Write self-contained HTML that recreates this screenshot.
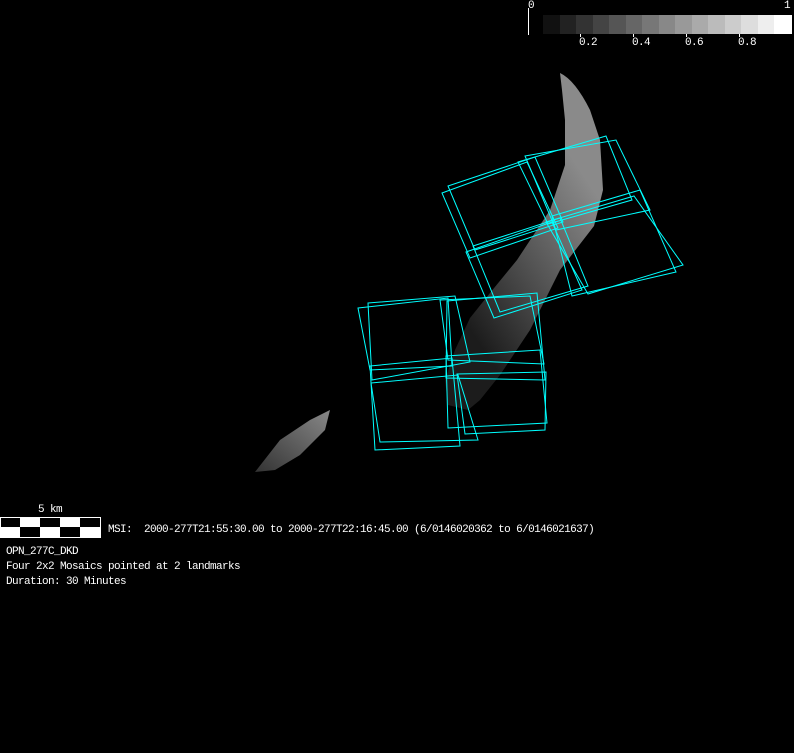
<!DOCTYPE html>
<html><head><meta charset="utf-8"><style>
html,body{margin:0;padding:0;background:#000;width:794px;height:753px;overflow:hidden;position:relative}
.t{position:absolute;color:#fff;font:11px "Liberation Mono",monospace;white-space:pre;line-height:12px;letter-spacing:-0.6px}
</style></head><body>
<svg width="794" height="753" style="position:absolute;left:0;top:0">
<defs>
<linearGradient id="g" gradientUnits="userSpaceOnUse" x1="450" y1="300" x2="600" y2="200">
<stop offset="0" stop-color="#1c1c1c"/><stop offset="0.5" stop-color="#555"/><stop offset="1" stop-color="#8a8a8a"/>
</linearGradient>
<linearGradient id="g2" x1="0" y1="1" x2="1" y2="0">
<stop offset="0" stop-color="#333"/><stop offset="1" stop-color="#888"/>
</linearGradient>
</defs>
<path d="M560,73 Q575,80 590,110 L600,140 L603,190 L594,226 L560,270 L530,330 L500,375 L480,400 L468,410 L448,405 L445,380 L455,350 L470,318 L490,293 L517,260 L550,210 L565,165 L565,120 L562,90 Z" fill="url(#g)"/>
<path d="M255,472 L280,440 L310,420 L330,410 L325,430 L300,455 L275,470 Z" fill="url(#g2)"/>
<line x1="528.5" y1="8" x2="528.5" y2="35" stroke="#fff"/>
<g>
<rect x="543" y="15" width="17" height="19" fill="#111"/>
<rect x="560" y="15" width="16" height="19" fill="#222"/>
<rect x="576" y="15" width="17" height="19" fill="#333"/>
<rect x="593" y="15" width="16" height="19" fill="#444"/>
<rect x="609" y="15" width="17" height="19" fill="#555"/>
<rect x="626" y="15" width="16" height="19" fill="#666"/>
<rect x="642" y="15" width="17" height="19" fill="#777"/>
<rect x="659" y="15" width="16" height="19" fill="#888"/>
<rect x="675" y="15" width="17" height="19" fill="#999"/>
<rect x="692" y="15" width="16" height="19" fill="#aaa"/>
<rect x="708" y="15" width="17" height="19" fill="#bbb"/>
<rect x="725" y="15" width="16" height="19" fill="#ccc"/>
<rect x="741" y="15" width="17" height="19" fill="#ddd"/>
<rect x="758" y="15" width="16" height="19" fill="#eee"/>
<rect x="774" y="15" width="18" height="19" fill="#fff"/>
</g>
<g stroke="#fff"><line x1="580.5" y1="34" x2="580.5" y2="37"/><line x1="633.5" y1="34" x2="633.5" y2="37"/><line x1="686.5" y1="34" x2="686.5" y2="37"/><line x1="739.5" y1="34" x2="739.5" y2="37"/></g>
<rect x="0.5" y="517.5" width="100" height="20" fill="#000" stroke="#fff"/>
<g fill="#fff">
<rect x="20" y="518" width="20" height="9"/><rect x="60" y="518" width="20" height="9"/>
<rect x="1" y="527" width="19" height="10"/><rect x="40" y="527" width="20" height="10"/><rect x="80" y="527" width="20" height="10"/>
</g>
<g fill="none" stroke="#0ff" stroke-width="1">
<polygon points="442,193 527,162 558,228 470,258"/>
<polygon points="518,162 606,136 632,200 548,224"/>
<polygon points="466,252 552,222 582,290 494,318"/>
<polygon points="546,222 634,196 683,265 588,294"/>
<polygon points="448,186 535,157 563,222 475,250"/>
<polygon points="525,156 616,140 650,210 556,230"/>
<polygon points="473,246 560,218 588,286 500,312"/>
<polygon points="552,216 640,190 676,272 572,296"/>
<polygon points="358,308 448,298 452,366 370,370"/>
<polygon points="440,300 530,296 544,364 448,360"/>
<polygon points="370,366 452,358 460,446 375,450"/>
<polygon points="446,356 540,350 547,423 448,428"/>
<polygon points="368,303 455,296 470,362 372,380"/>
<polygon points="447,301 537,293 545,380 446,378"/>
<polygon points="371,383 458,375 478,440 380,442"/>
<polygon points="457,374 546,372 545,430 465,434"/>
</g>
</svg>
<div class="t" style="left:528px;top:0px">0</div>
<div class="t" style="left:784px;top:0px">1</div>
<div class="t" style="left:579px;top:37px">0.2</div>
<div class="t" style="left:632px;top:37px">0.4</div>
<div class="t" style="left:685px;top:37px">0.6</div>
<div class="t" style="left:738px;top:37px">0.8</div>
<div class="t" style="left:38px;top:504px">5 km</div>
<div class="t" style="left:108px;top:524px">MSI:  2000-277T21:55:30.00 to 2000-277T22:16:45.00 (6/0146020362 to 6/0146021637)</div>
<div class="t" style="left:6px;top:546px">OPN_277C_DKD</div>
<div class="t" style="left:6px;top:561px">Four 2x2 Mosaics pointed at 2 landmarks</div>
<div class="t" style="left:6px;top:576px">Duration: 30 Minutes</div>
</body></html>
